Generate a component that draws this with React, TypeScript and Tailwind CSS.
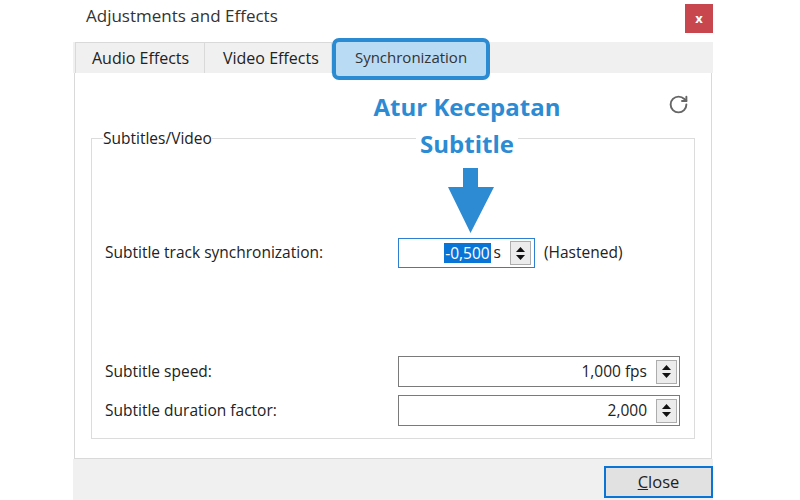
import { RotateCw } from "lucide-react";

const font = { fontFamily: '"Open Sans", "Noto Sans", sans-serif' };

function Spin() {
  return (
    <div className="flex h-[24px] w-[21px] flex-col items-center justify-center border border-[#adadad] bg-[#ececec]">
      <svg width="9" height="5" viewBox="0 0 9 5" className="mb-[3px]">
        <polygon points="0,5 9,5 4.5,0" fill="#111" />
      </svg>
      <svg width="9" height="5" viewBox="0 0 9 5">
        <polygon points="0,0 9,0 4.5,5" fill="#111" />
      </svg>
    </div>
  );
}

function Row({
  label,
  value,
  unit,
}: {
  label: string;
  value: string;
  unit?: string;
}) {
  return (
    <div className="flex items-center">
      <div className="w-[293px] text-[15.5px] text-[#222]">{label}</div>
      <div className="flex h-[31px] w-[282px] items-center justify-end border border-[#7a7a7a] bg-white pr-[2px]">
        <span className="text-[15.5px] text-[#222]">
          {value}
          {unit ? ` ${unit}` : ""}
        </span>
        <div className="ml-[9px]">
          <Spin />
        </div>
      </div>
    </div>
  );
}

export default function App() {
  return (
    <div className="h-[500px] w-[800px] overflow-hidden bg-white" style={font}>
      <div className="ml-[73px] flex w-[640px] flex-col">
        {/* Title bar */}
        <div className="flex h-[42px] items-start justify-between bg-white">
          <div className="pl-[13px] pt-[3px] text-[17px] text-[#333]">
            Adjustments and Effects
          </div>
          <div className="mt-[4px] flex h-[29px] w-[28px] items-center justify-center bg-[#c8464d] text-[13px] font-bold leading-none text-white">
            x
          </div>
        </div>

        {/* Tabs */}
        <div className="relative z-10 flex h-[31px] items-start bg-[#f0f0f0] pl-[2px]">
          <div className="flex h-[31px] w-[130px] items-center border-t border-l border-r border-[#d9d9d9] pl-[16px] text-[16px] text-[#222]">
            Audio Effects
          </div>
          <div className="flex h-[31px] w-[127px] items-center border-t border-r border-[#d9d9d9] pl-[18px] text-[16px] text-[#222]">
            Video Effects
          </div>
          <div className="-mt-[4px] flex h-[42px] w-[158px] items-center justify-center rounded-[7px] border-[4px] border-[#2a8ad2] bg-[#b9dbf4] pb-[3px] text-[15px] text-[#333]">
            Synchronization
          </div>
        </div>

        {/* Panel */}
        <div className="relative mr-[1px] ml-[1px] flex flex-col border border-t-0 border-[#d9d9d9] bg-white pb-[19px]">
          <div className="flex h-[55px] justify-end pr-[22px] pt-[21px]">
            <RotateCw className="h-[21px] w-[21px] text-[#666]" strokeWidth={2.2} />
          </div>

          <fieldset className="mr-[18px] ml-[16px] border border-[#dcdcdc] pr-[14px] pb-[12px] pl-[13px]">
            <legend className="-ml-[2px] px-0 text-[15.5px] leading-[20px] text-[#222]">
              Subtitles/Video
            </legend>

            <div className="mt-[90px] flex items-center">
              <div className="w-[293px] text-[15.5px] text-[#222]">
                Subtitle track synchronization:
              </div>
              <div className="flex h-[30px] w-[137px] items-center justify-end border border-[#2f7fd0] bg-white pr-[3px]">
                <span className="bg-[#0a74d6] px-[1px] text-[15.5px] leading-[20px] text-white">
                  -0,500
                </span>
                <span className="ml-[3px] text-[15.5px] text-[#222]">s</span>
                <div className="ml-[9px]">
                  <Spin />
                </div>
              </div>
              <div className="ml-[9px] text-[15.5px] text-[#222]">(Hastened)</div>
            </div>

            <div className="mt-[88px] flex flex-col gap-[8px]">
              <Row label="Subtitle speed:" value="1,000" unit="fps" />
              <Row label="Subtitle duration factor:" value="2,000" />
            </div>
          </fieldset>

          {/* Annotation */}
          <div className="absolute top-[15px] left-[292px] w-[200px] text-center text-[24px] leading-[37px] font-bold text-[#2d8bd3]">
            <div>Atur Kecepatan</div>
            <div>
              <span className="bg-white px-1">Subtitle</span>
            </div>
          </div>
          <svg
            className="absolute top-[95px] left-[372px]"
            width="48"
            height="66"
            viewBox="0 0 48 66"
          >
            <polygon
              points="16,0 31,0 31,19 47,19 23.5,65 1,19 16,19"
              fill="#2d8bd3"
            />
          </svg>
        </div>

        {/* Footer */}
        <div className="flex h-[43px] items-start justify-end bg-[#f0f0f0] pt-[7px]">
          <div className="flex h-[32px] w-[109px] items-center justify-center border-2 border-[#0a74d6] bg-[#e1e1e1] text-[16.5px] text-[#222]">
            <span>
              <span className="underline">C</span>lose
            </span>
          </div>
        </div>
      </div>
    </div>
  );
}
